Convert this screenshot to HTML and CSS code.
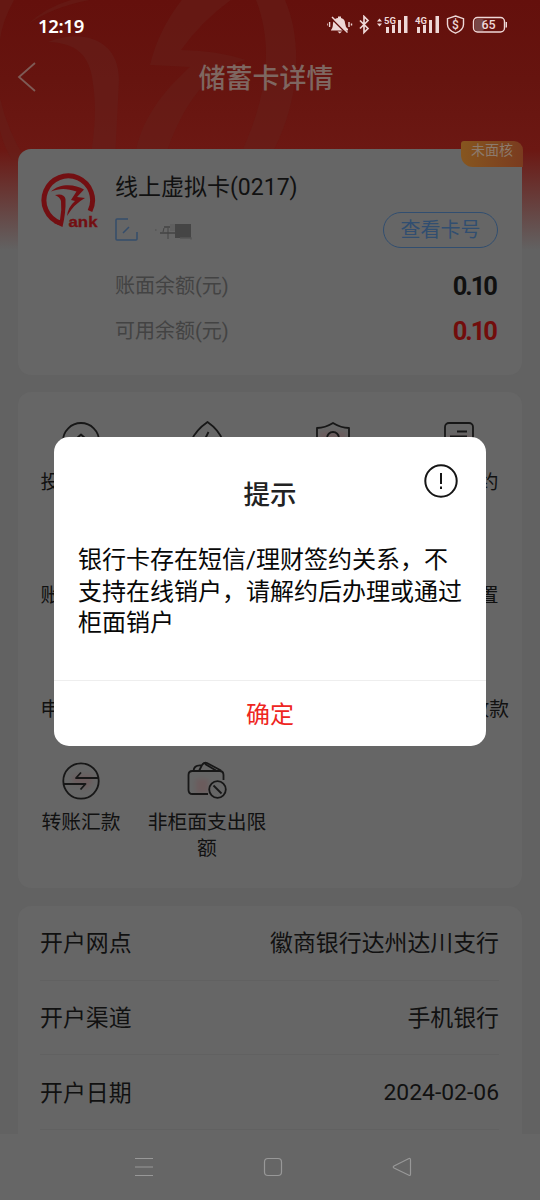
FILE: index.html
```html
<!DOCTYPE html>
<html lang="zh-CN">
<head>
<meta charset="utf-8">
<title>储蓄卡详情</title>
<link rel="stylesheet" href="styles.css">
</head>
<body>
<div class="screen">
  <svg class="watermark" width="540" height="160" viewBox="0 0 540 160" fill="#65201a">
    <path fill-rule="evenodd" d="M0 0H14Q2 22 0 40ZM0 98Q7 130 26 160H12Q3 145 0 130ZM256 0H285C306 48 296 115 268 160H238C264 105 276 52 256 0Z" opacity=".5"/>
    <path d="M27 25Q55 -2 100 -5H180Q75 -10 27 25ZM184 -3H235Q202 20 181 50Q215 50 246 60Q192 72 164 160H134C140 118 165 90 190 67L150 65Q158 30 184 -3Z" opacity=".5"/>
    <path d="M48 42C82 28 119 39 119 80L115 160H90Q98 115 93 84C90 54 76 43 48 42Z" opacity=".6"/>
  </svg>
  <header class="status">
    <span class="time">12:19</span>
    <svg class="status-icons" width="182" height="20" viewBox="0 0 182 20" fill="none" stroke="#eed8d7" stroke-width="1.4">
      <path d="M4 15C7 12 5 8 7 6Q8 3 11 3V1.500H14V3Q18 4 18 8L19 12L21 14V15.500H4ZM10.500 16.500H15L12.700 18.500Z" fill="#eed8d7" stroke="none"/>
      <path d="M0 8.500V10.500M2.600 7V12M22 7V12M24.500 8.500V10.500"/>
      <path d="M4.500 3.500L19.500 18.500" stroke="#64110d" stroke-width="1.600"/><path d="M5 2L20.500 17.500"/>
      <path d="M33 5.500L41 13.500L37 17.500V1.500L41 5.500L33 13.500" stroke-width="1.700"/>
      <path d="M50 6.500L52.500 3.500L55 6.500ZM50 8.500H55L52.500 11.500Z" fill="#eed8d7" stroke="none"/>
      <g fill="#eed8d7" stroke="none"><path d="M59 12h3v6h-3zM65 9h3v9h-3zM71 5h3v13h-3zM77 1h3.500v17H77zM90 12h3v6h-3zM96 9h3v9h-3zM102 5h3v13h-3zM108.500 1h3.500v17h-3.500z"/>
      <text x="57" y="9" class="network">5G</text><text x="88" y="9" class="network">4G</text></g>
      <path d="M128.500 1L136.500 3.700V9.500Q136.500 15 128.500 18.200Q120.500 15 120.500 9.500V3.700Z"/>
      <text x="125" y="14" class="dollar">$</text>
      <rect x="148" y="4" width="9" height="12" rx="2" fill="#774746" stroke="none"/>
      <rect x="146.500" y="2.500" width="31" height="14.500" rx="4"/><path d="M179.300 7V12.500"/>
      <text x="154.500" y="14.300" class="battery">65</text>
    </svg>
  </header>
  <div class="titlebar">
    <svg class="back" width="20" height="30" viewBox="0 0 20 30"><path d="M18 1L2 15L18 29" fill="none" stroke="#7e5b56" stroke-width="1.800"/></svg>
    <h1>储蓄卡详情</h1>
  </div>

  <section class="card account">
    <span class="badge">未面核</span>
    <svg class="logo" width="59" height="58" viewBox="0 0 59 58" fill="#730f12">
      <path d="M50 39A24.300 24.300 0 1 0 20 51" fill="none" stroke="#730f12" stroke-width="5"/>
      <path d="M15 23Q24 21 25.500 27Q26 40 22.500 55L14 51L20 48Q22 38 21 29Q20 25 15 23Z"/>
      <path d="M11 19.500C20 11 35 12 44 17.500L37 25L45 26Q34 32 27 44Q28 35 35 29L31 28L36.500 19.500C27 16 19 16 11 19.500Z"/>
      <text x="28.500" y="54.500" class="logo-text" textLength="29" lengthAdjust="spacingAndGlyphs">ank</text>
    </svg>
    <div class="account-body">
      <div class="account-name">线上虚拟卡(0217)</div>
      <div class="alias">
        <svg width="78" height="24" viewBox="0 0 78 24" fill="none">
          <path d="M13 1H2Q1 1 1 2V21Q1 22 2 22H21Q22 22 22 21V14M8 15L14 9" stroke="#354d6b" stroke-width="1.500"/>
          <path d="M49 9H60M45 15H60" stroke="#333" stroke-width="1.200"/><path d="M53 10V21M49 10L48 14" stroke="#444"/>
          <rect x="55" y="6" width="6" height="7" fill="#5f5f5f"/><rect x="60" y="6" width="16" height="14" fill="#454545"/>
          <path d="M65 20H76V21.500M40 12h1.500" stroke="#555" stroke-width="1.500"/>
        </svg>
        <span class="view-number">查看卡号</span>
      </div>
      <div class="balance"><span>账面余额(元)</span><b>0.10</b></div>
      <div class="balance available"><span>可用余额(元)</span><b>0.10</b></div>
    </div>
  </section>

  <section class="card services">
    <div class="service">
      <svg viewBox="0 0 40 40"><circle cx="20" cy="20" r="18"/><path d="M15 18L20 13.500L25 18"/></svg>
      <span class="from-left">投</span>
    </div>
    <div class="service">
      <svg viewBox="0 0 40 40"><path d="M20.500 1Q32 9 36 20Q33 36 20 38Q7 36 4 20Q9 9 20.500 1ZM21.500 11L17 20H23L19 28"/></svg>
    </div>
    <div class="service">
      <svg viewBox="0 0 40 40"><path class="tint" d="M7 11h26v14H7z"/><path d="M20 2Q28 7 36 7V24Q33 34 20 38Q7 34 4 24V7Q12 7 20 2Z"/><circle cx="20" cy="17" r="6"/></svg>
    </div>
    <div class="service">
      <svg viewBox="0 0 40 40"><path class="tint" d="M9 15h24v14H9z"/><rect x="6" y="2" width="28" height="36" rx="4"/><path d="M18 10.500H28M11 15.500H28"/></svg>
      <span class="from-right">约</span>
    </div>
    <div class="service"><i class="blank"></i><span class="from-left">账</span></div>
    <div class="service"></div>
    <div class="service"></div>
    <div class="service"><i class="blank"></i><span class="from-right">置</span></div>
    <div class="service"><i class="blank"></i><span class="from-left">申</span></div>
    <div class="service"></div>
    <div class="service"></div>
    <div class="service"><i class="blank"></i><span class="from-right wide">收款</span></div>
    <div class="service">
      <svg viewBox="0 0 40 40"><path class="tint" d="M13 14H31V22L24 29L20 23H11Z"/><circle cx="20" cy="20" r="17.700"/><path d="M38 17H15L20 11.500M2 23H24.500L19.500 28.500"/></svg>
      <span>转账汇款</span>
    </div>
    <div class="service">
      <svg viewBox="0 0 40 40"><path class="tint" d="M9 18H21V32H9Z"/><path d="M21 33H5.500Q1.500 33 1.500 29V14Q1.500 10 5.500 10H32.500Q36.500 10 36.500 14V19M6.500 10Q7 4 14 4.500M12 10L15 4Q17 1 20 2L34 9.500M18 3L29 9.500"/><circle cx="30.500" cy="28.500" r="8.300"/><path d="M26.500 24.500L34.500 32.500"/></svg>
      <span>非柜面支出限额</span>
    </div>
  </section>

  <section class="card details">
    <div class="detail"><span>开户网点</span><span>徽商银行达州达川支行</span></div>
    <div class="detail"><span>开户渠道</span><span>手机银行</span></div>
    <div class="detail"><span>开户日期</span><span class="date">2024-02-06</span></div>
  </section>

  <nav class="system-nav">
    <svg viewBox="0 0 20 20"><path d="M1 1.500H19M1 10H19M1 18.500H19"/></svg>
    <svg viewBox="0 0 20 20"><rect x="1.500" y="1.500" width="17" height="17" rx="3.500"/></svg>
    <svg viewBox="0 0 20 20"><path d="M17 1.500Q18.500 1 18.500 3V17Q18.500 19 17 18.300L2 11Q.5 10 2 9Z"/></svg>
  </nav>

  <div class="dialog" role="alertdialog">
    <h2>提示</h2>
    <svg class="alert" width="34" height="34" viewBox="0 0 34 34" fill="none" stroke="#151515" stroke-width="2"><circle cx="17" cy="17" r="15.700"/><path d="M17 9V20M17 22.500V25"/></svg>
    <p>银行卡存在短信/理财签约关系，不支持在线销户，请解约后办理或通过柜面销户</p>
    <button class="confirm">确定</button>
  </div>
</div>
</body>
</html>
```

FILE: styles.css
```css
* { box-sizing: border-box; }
body { margin: 0; }
.screen {
  position: relative;
  width: 540px;
  height: 1200px;
  overflow: hidden;
  display: flex;
  flex-direction: column;
  font-family: Roboto, "Noto Sans CJK SC", sans-serif;
  color: #111;
  background: linear-gradient(#64100c 0, #66140f 80px, #6c1813 150px, #626262 250px) #626262;
}
.watermark { position: absolute; left: 0; top: 0; }
.status {
  position: relative;
  height: 50px;
  flex: none;
  display: flex;
  justify-content: space-between;
  align-items: center;
  padding: 0 31px 0 38px;
}
.time { font: 600 18.5px/24px "Noto Sans", sans-serif; color: #fff; letter-spacing: -.3px; padding-top: 1px; }
.status-icons text { fill: #eed8d7; stroke: none; font-family: Roboto, sans-serif; }
.status-icons .network { font-size: 9.5px; font-weight: 700; stroke: #64110d; stroke-width: 2px; paint-order: stroke; }
.status-icons .dollar { font-size: 12px; font-weight: 500; }
.status-icons .battery { font-size: 12.5px; font-weight: 500; }
.titlebar {
  position: relative;
  height: 99px;
  flex: none;
  padding: 12px 0 0 17px;
  display: flex;
  align-items: flex-start;
}
.titlebar h1 {
  flex: 1;
  margin: 0;
  text-align: center;
  font-size: 27px;
  font-weight: 500;
  line-height: 34px;
  color: #7e6761;
  padding-right: 45px;
}
.card { width: 504px; margin: 0 auto; flex: none; background: #666; border-radius: 13px; }
.account { position: relative; height: 226px; display: flex; padding: 23px 24px 0 22px; }
.badge {
  position: absolute;
  right: -1px;
  top: -8px;
  width: 62px;
  height: 26px;
  padding-left: 10px;
  border-radius: 3px 9px 0 12px;
  background: linear-gradient(90deg, #86561f, #7a3b1f);
  color: #8c7b6d;
  font-size: 14px;
  line-height: 19px;
}
.logo { flex: none; }
.logo-text { font: 900 14px "Liberation Sans", sans-serif; stroke: #730f12; stroke-width: .3px; }
.account-body { flex: 1; margin-left: 16px; }
.account-name { font-size: 23px; line-height: 32px; }
.alias { display: flex; align-items: center; justify-content: space-between; margin-top: 7px; height: 38px; }
.view-number {
  width: 115px;
  height: 36px;
  border: 1.5px solid #314e70;
  border-radius: 18px;
  text-align: center;
  font-size: 20px;
  line-height: 35px;
  color: #314e70;
}
.balance { display: flex; justify-content: space-between; align-items: center; height: 45px; margin-top: 14px; font-size: 20px; color: #434343; }
.balance span { line-height: 30px; padding-top: 1px; }
.balance b { font-size: 25.5px; letter-spacing: -2px; margin-right: 2px; color: #101010; }
.balance.available { margin-top: 0; }
.balance.available b { color: #720d0c; }
.services {
  height: 496px;
  margin-top: 17px;
  padding-top: 29px;
  display: grid;
  grid-template-columns: repeat(4, 126px);
  grid-template-rows: repeat(4, 113.3px);
}
.service { display: flex; flex-direction: column; align-items: center; }
.service svg, .blank { width: 40px; height: 40px; flex: none; }
.service svg { fill: none; stroke: #171717; stroke-width: 1.8; stroke-linejoin: round; }
.service .tint { fill: #725052; stroke: none; opacity: .45; filter: blur(2px); }
.service span { width: 120px; margin-top: 9px; text-align: center; font-size: 19.8px; line-height: 26px; }
.service .from-left { width: 81px; text-align: left; }
.service .from-right { width: 79px; text-align: right; }
.service .from-right.wide { width: 100px; }
.details { height: 228px; margin-top: 18px; padding: 0 23px 0 22px; border-radius: 13px 13px 0 0; }
.detail {
  height: 74.7px;
  padding-bottom: 3px;
  display: flex;
  justify-content: space-between;
  align-items: center;
  border-bottom: 1px solid #616161;
  font-size: 22.9px;
}
.date { padding-top: 3px; }
.system-nav { height: 66px; flex: none; background: #666; display: flex; justify-content: center; align-items: center; gap: 109px; padding-left: 5px; }
.system-nav svg { width: 20px; height: 20px; fill: none; stroke: #989898; stroke-width: 1.2; }
.dialog {
  position: absolute;
  left: 54px;
  top: 437px;
  width: 432px;
  height: 309px;
  background: #fff;
  border-radius: 15px;
  display: flex;
  flex-direction: column;
}
.dialog h2 { margin: 38px 0 0; text-align: center; font-size: 26.5px; font-weight: 500; line-height: 40px; color: #222; }
.alert { position: absolute; right: 28px; top: 27px; }
.dialog p { margin: 30px 23px 0 24px; font-size: 24px; line-height: 31.5px; color: #080808; }
.confirm {
  margin: auto 0 0;
  height: 66px;
  padding: 3px 0 0;
  border: 0;
  border-top: 1px solid #eee;
  background: none;
  font: 24px/36px Roboto, "Noto Sans CJK SC", sans-serif;
  color: #ee2521;
}
```
